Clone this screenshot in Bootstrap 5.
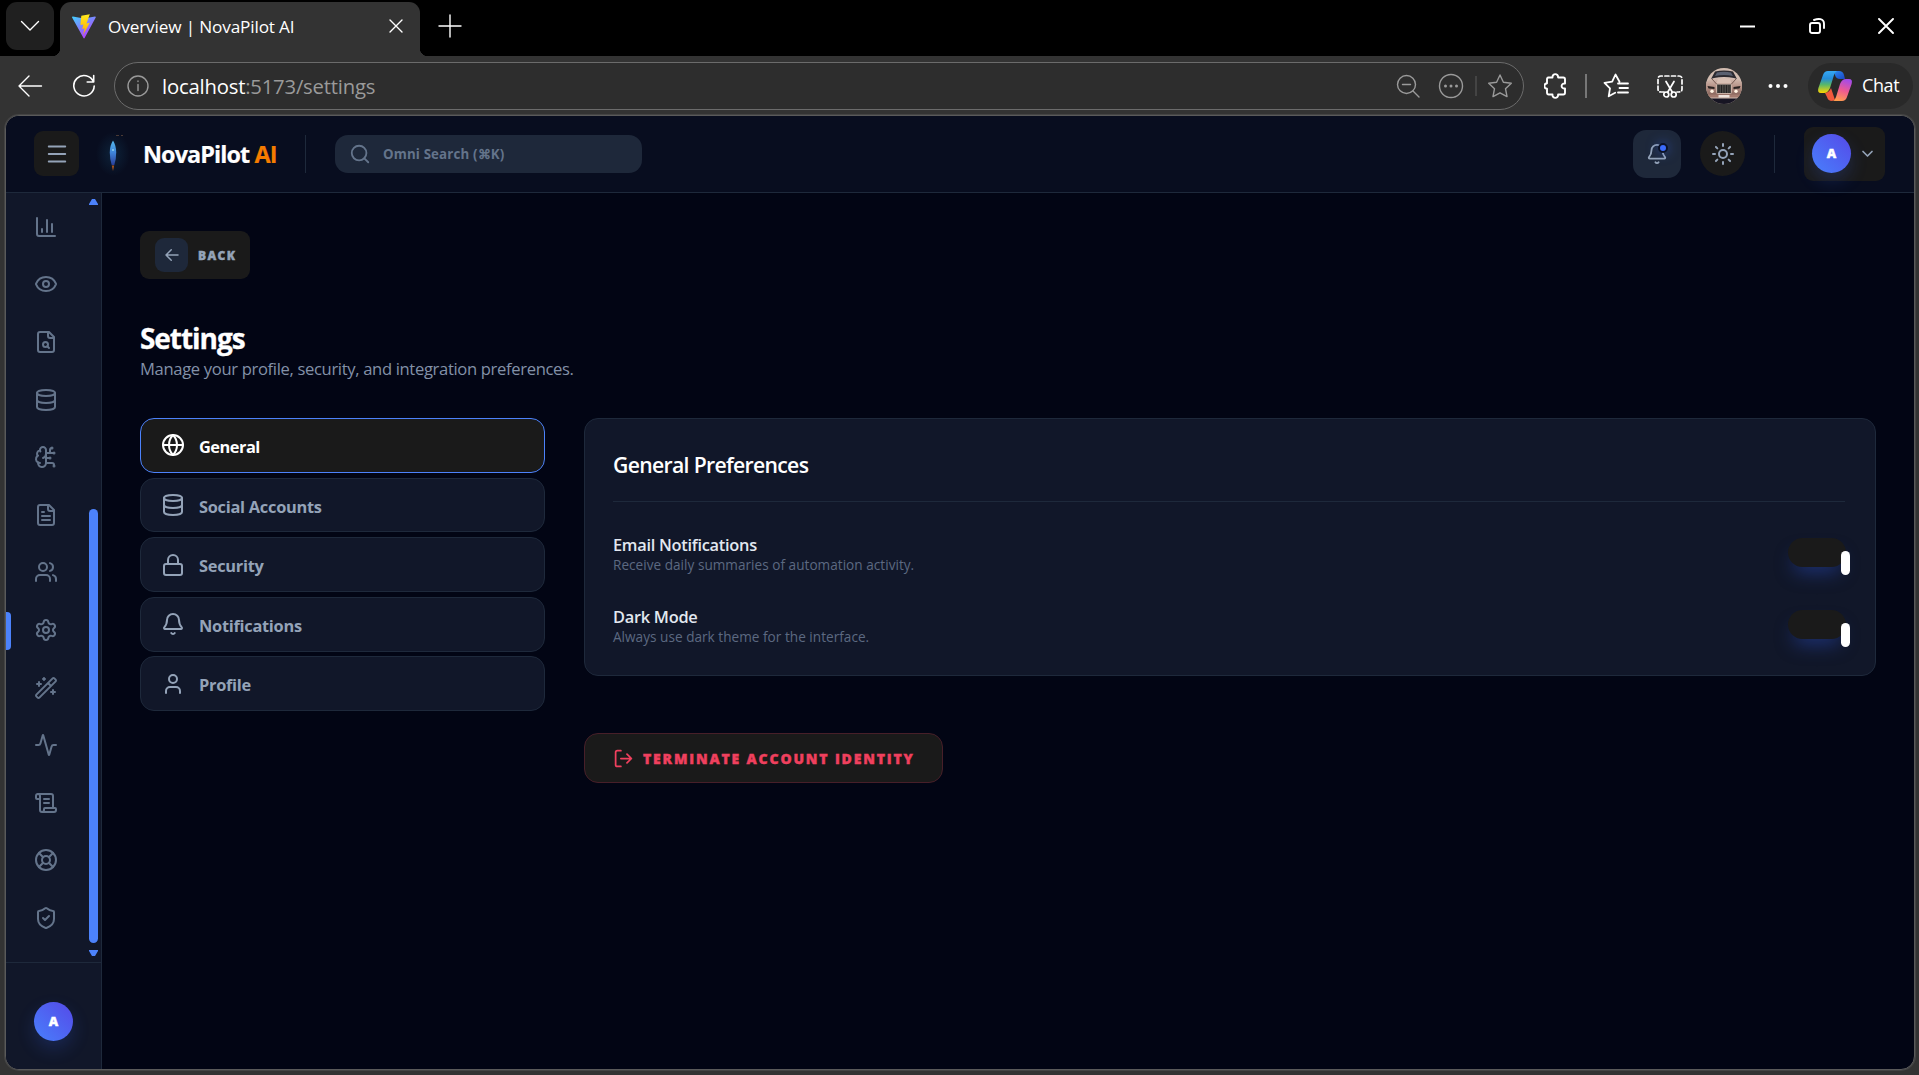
<!DOCTYPE html>
<html lang="en" data-bs-theme="dark">
<head>
<meta charset="utf-8">
<title>Overview | NovaPilot AI</title>
<meta name="viewport" content="width=device-width, initial-scale=1">
<link href="https://cdn.jsdelivr.net/npm/bootstrap@5.3.0/dist/css/bootstrap.min.css" rel="stylesheet">
<style>
  :root { --np-blue:#4c82fb; --np-line:#1e293b; --np-panel:#111729; --np-coal:#1a1a1a; --np-muted:#94a3b8; --np-dim:#64748b; }
  body { font-family:"Open Sans","Noto Sans",sans-serif; background:#333; color:#fff; width:1919px; height:1075px; line-height:1.2; }
  svg { display:block; flex:none; }
  .ln { fill:none; stroke:currentColor; stroke-width:2; stroke-linecap:round; stroke-linejoin:round; width:24px; height:24px; }
  .fluent { fill:none; stroke:currentColor; stroke-width:1.4; stroke-linecap:round; stroke-linejoin:round; }
  .drop1 { padding-top:2px; }

  /* browser chrome */
  .titlebar { height:56px; background:#000; padding:2px 0 0 6px; }
  .tab-menu { width:48px; height:48px; border-radius:11px; background:#202020; }
  .browser-tab { width:360px; height:54px; margin-left:6px; background:#333; border-radius:11px 11px 0 0; padding:0 17px 6px 12px; font-size:17.2px; letter-spacing:-.15px; }
  .browser-tab::before, .browser-tab::after { content:""; position:absolute; bottom:0; width:8px; height:8px; }
  .browser-tab::before { left:-8px; background:radial-gradient(circle at 0 0,transparent 8px,#333 8.5px); }
  .browser-tab::after { right:-8px; background:radial-gradient(circle at 100% 0,transparent 8px,#333 8.5px); }
  .win-btns { gap:53.5px; padding:0 25px 6px 0; }
  .toolbar { height:59px; padding:0 6px 0 17px; }
  .omnibox { width:1410px; height:48px; margin-left:18px; border:1.5px solid #6b6b6b; border-radius:24px; background:#2d2d2d; padding:0 10px 0 11px; color:#9a9a9a; font-size:20.3px; letter-spacing:-.2px; }
  .omnibox b { font-weight:400; color:#fff; }
  .v-rule { width:2px; height:24px; background:#777; }
  .chat-pill { width:105px; height:46px; border-radius:23px; background:#292929; font-size:18px; padding-left:9px; }

  /* app frame */
  .app-frame { width:1910px; height:955px; margin-left:5px; border:1px solid #5a5a5a; border-radius:14px; background:#020514; overflow:hidden; box-shadow:0 0 0 1px #444; }
  .app-header { height:77px; background:#080d1f; border-bottom:1px solid var(--np-line); padding:0 29px 1px 28px; }
  .coal-btn { background:var(--np-coal); border:0; color:var(--np-muted); border-radius:9px; padding:0; }
  .sq45 { width:45px; height:45px; }
  .brand { font-size:23.4px; font-weight:700; letter-spacing:-.92px; margin-left:14px; width:162px; white-space:nowrap; -webkit-text-stroke:.2px; }
  .brand span { color:#f57c00; }
  .v-line { width:1px; height:38px; background:var(--np-line); }
  .search-box { width:307px; height:38px; margin-left:29px; border-radius:13px; background:#1e283a; color:var(--np-dim); padding-left:14px; font-size:13.3px; font-weight:700; letter-spacing:.15px; }
  .bell-btn { width:48px; height:48px; border-radius:13px; background:#1e283a; color:var(--np-muted); border:0; padding:0; }
  .bell-dot { position:absolute; left:25px; top:13px; width:10px; height:10px; border-radius:50%; background:#3b6bfb; border:2px solid #0b1226; box-shadow:0 0 12px #3b6bfb88; }
  .avatar { width:39px; height:39px; border-radius:50%; background:linear-gradient(45deg,#4880fc,#5549e8); font-weight:800; font-size:13px; -webkit-text-stroke:.4px; box-shadow:0 8px 18px #3b6bfb33; }
  .profile-btn { width:81px; height:54px; padding:0 11px 0 8px; }

  .side { width:96px; background:var(--np-panel); border-right:1px solid var(--np-line); }
  .side-scroll { height:770px; border-bottom:1px solid var(--np-line); color:var(--np-dim); }
  .side-nav { width:83px; padding-top:5px; }
  .side-item { height:57.6px; padding-left:28px; position:relative; }
  .side-item.on::before { content:""; position:absolute; left:0; top:10.5px; width:5px; height:38px; border-radius:0 4px 4px 0; background:var(--np-blue); }
  .side-bar { width:9px; padding:6px 0 6px; }
  .side-bar i { width:9px; height:434px; border-radius:5px; background:var(--np-blue); margin-bottom:7px; margin-top:auto; }

  .page-area { padding:38px 38px 0; }
  .back-btn { width:110px; height:48px; padding-left:15px; font-size:12px; font-weight:800; letter-spacing:1.35px; gap:10px; }
  .back-btn > span:first-child { width:33px; height:34px; border-radius:9px; background:#1e283a; }
  .back-btn > span:last-child, .end-btn > span { -webkit-text-stroke:.4px; }
  .page-title { font-size:28px; font-weight:700; letter-spacing:-1.05px; line-height:34px; margin:42px 0 0; -webkit-text-stroke:.3px; }
  .page-sub { font-size:16.6px; line-height:24px; letter-spacing:-.34px; color:#8391a8; margin:2px 0 37px; }
  .tab-col { width:405px; gap:4.8px; }
  .tab-link { height:54.8px; border:1px solid var(--np-line); border-radius:14px; background:var(--np-panel); color:var(--np-muted); font-size:16.4px; font-weight:700; letter-spacing:-.28px; padding:0 20px; gap:14px; }
  .tab-link span { padding-top:3px; }
  .tab-link.on { background:var(--np-coal); border-color:var(--np-blue); color:#fff; letter-spacing:-.5px; }
  .pref-card { width:1292px; height:258px; border:1px solid var(--np-line); border-radius:14px; background:var(--np-panel); padding:29px 30px 29px 28px; }
  .pref-title { font-size:21.2px; font-weight:600; letter-spacing:-.68px; line-height:34px; height:54px; border-bottom:1px solid var(--np-line); margin:0 0 29px; }
  .pref-row { height:72px; }
  .pref-name { font-size:16.4px; font-weight:600; letter-spacing:-.28px; line-height:25px; padding-top:1px; color:#e2e8f0; }
  .pref-note { font-size:13.6px; line-height:18px; margin-top:-1px; letter-spacing:.02px; color:#5c6981; }
  .switch { width:58px; height:29px; margin:7px -1px 0 0; border-radius:15px; background:var(--np-coal); box-shadow:0 11px 18px -5px #2747b088; position:relative; }
  .switch::after { content:""; position:absolute; left:53px; top:13px; width:9px; height:24px; border-radius:5px; background:#fff; }
  .end-btn { width:359px; height:50px; margin-top:57px; border:1px solid #471f29; border-radius:14px; background:var(--np-coal); color:#f0405e; font-size:14px; font-weight:800; letter-spacing:1.83px; padding-left:28px; gap:9px; white-space:nowrap; }
</style>
<script src="https://cdn.jsdelivr.net/npm/bootstrap@5.3.0/dist/js/bootstrap.bundle.min.js"></script>
</head>
<body class="overflow-hidden">

<header>
  <div class="titlebar d-flex align-items-start">
    <div class="tab-menu d-flex align-items-center justify-content-center">
      <svg class="fluent" width="20" height="12" viewBox="0 0 20 12"><path d="M1.500 1.500 10 10l8.500-8.500"/></svg>
    </div>
    <div class="browser-tab d-flex align-items-center position-relative">
      <svg width="24" height="25" viewBox="0 0 24 25">
        <defs>
          <linearGradient id="vA" x1="0" y1="0" x2=".7" y2="1"><stop offset="0" stop-color="#41d1ff"/><stop offset="1" stop-color="#bd34fe"/></linearGradient>
          <linearGradient id="vB" x1="0" y1="0" x2="0" y2="1"><stop offset="0" stop-color="#ffea1f"/><stop offset="1" stop-color="#ffa800"/></linearGradient>
        </defs>
        <path d="M23.700 3.500 12.600 24c-.2.500-.9.500-1.100 0L.1 3.500c-.2-.5.200-1.100.7-1L12 4.500l11-2c.6-.1 1 .500.700 1z" fill="url(#vA)"/>
        <path d="m17.800.2-8.500 1.500-.9 9.300 3-.6-1.200 4.500 2.500-.6-1.700 6.800 6.800-12.300-3.300.6z" fill="url(#vB)"/>
      </svg>
      <span class="ms-2 ps-1 flex-grow-1 drop1">Overview | NovaPilot AI</span>
      <svg class="fluent" width="14" height="14" viewBox="0 0 14 14"><path d="m1 1 12 12M13 1 1 13"/></svg>
    </div>
    <svg class="fluent mt-2" style="width:26px;height:32px;margin-left:17px" viewBox="0 0 26 32"><path d="M13 5v22M2 16h22"/></svg>
    <div class="win-btns d-flex align-items-center ms-auto align-self-stretch">
      <svg width="15" height="3"><path d="M0 1.500h15" stroke="#fff" stroke-width="2"/></svg>
      <svg class="fluent" width="16" height="16" viewBox="0 0 16 16" style="stroke-width:1.9"><rect x="1" y="5" width="10" height="10" rx="2"/><path d="M5 2c4-1.500 10-2 10 4v4"/></svg>
      <svg class="fluent" width="16" height="16" viewBox="0 0 16 16" style="stroke-width:1.9"><path d="m1 1 14 14M15 1 1 15"/></svg>
    </div>
  </div>

  <div class="toolbar d-flex align-items-center">
    <svg class="fluent" width="26" height="22" viewBox="0 0 26 22"><path d="M12 1 2 11l10 10M2 11h22.500"/></svg>
    <svg class="fluent" width="24" height="24" viewBox="0 0 24 24" style="margin-left:29px;stroke-width:1.600"><path d="M21.500 8A10.200 10.200 0 1 0 22.200 12M21.700 1.500V8h-6.500"/></svg>
    <div class="omnibox d-flex align-items-center">
      <svg class="fluent" width="24" height="24" viewBox="0 0 24 24"><circle cx="12" cy="12" r="10"/><path d="M12 10.500v6M12 7v.5"/></svg>
      <span class="flex-grow-1 ps-2 ms-1 drop1"><b>localhost</b>:5173/settings</span>
      <svg class="fluent" width="24" height="24" viewBox="0 0 24 24"><circle cx="10.500" cy="10.500" r="9"/><path d="m17 17 6 6M6.500 10.500h8"/></svg>
      <svg class="fluent" width="26" height="26" viewBox="0 0 26 26" style="margin-left:18px"><circle cx="13" cy="13" r="11.500"/><g fill="currentColor" stroke="none"><circle cx="7.500" cy="13" r="1.500"/><circle cx="13" cy="13" r="1.500"/><circle cx="18.500" cy="13" r="1.500"/></g></svg>
      <div class="v-rule" style="height:20px;background:#444;margin-left:11px"></div>
      <svg class="fluent" width="26" height="26" viewBox="0 0 26 26" style="margin-left:10px"><path d="m13 2 3.400 7.200 7.900 1-5.800 5.500 1.500 7.900L13 19.800l-7 3.800 1.500-7.900-5.800-5.500 7.900-1z"/></svg>
    </div>
    <svg class="fluent" width="24" height="26" viewBox="0 0 24 26" style="margin-left:20px;stroke-width:1.900"><path d="M4 4.500h4.500c-.4-4.500 6-4.500 5.600 0h5.200q1.700 0 1.700 1.700v4.300c-4.500-.6-4.500 5.600 0 5v4.300q0 1.700-1.700 1.700h-5.200c.4 4.500-6 4.500-5.600 0H4.700Q3 21.500 3 19.800v-4c-3.500-.6-3.500-5 0-5.600v-4q0-1.700 1.700-1.700z"/></svg>
    <div class="v-rule" style="margin-left:17px"></div>
    <svg class="fluent" width="26" height="26" viewBox="0 0 26 26" style="margin-left:16px;stroke-width:1.800"><path d="M16.500 8.800 12.500 1.500 9.200 8.700l-7.700 1.100 5.500 5.500-1.300 8 6.500-3.500M15 10.500h10M16.500 15h8.500M15 19.500h10"/></svg>
    <svg class="fluent" width="26" height="24" viewBox="0 0 26 24" style="margin-left:28px;stroke-width:1.700"><path d="M7 18H4q-3 0-3-3V5q0-3 3-3h18q3 0 3 3v10q0 3-3 3h-2" stroke-dasharray="4 2.600"/><path d="m9 7.500 6.500 11M17 7.500l-6.500 11"/><circle cx="9.300" cy="20.500" r="2.500"/><circle cx="16.700" cy="20.500" r="2.500"/></svg>
    <svg width="36" height="36" viewBox="0 0 36 36" style="margin-left:23px">
      <defs>
        <clipPath id="carClip"><circle cx="18" cy="18" r="18"/></clipPath>
        <linearGradient id="carPaint" x1="0" y1="0" x2="0" y2="1"><stop offset="0" stop-color="#d9c3b8"/><stop offset=".45" stop-color="#b8958a"/><stop offset="1" stop-color="#7d5a51"/></linearGradient>
      </defs>
      <g clip-path="url(#carClip)">
        <rect width="36" height="36" fill="#d2bcb0"/>
        <path d="M9 3.500q9-2 18 0l4 7.500H5z" fill="#2c2a30"/>
        <path d="M11 4.500q7-1.500 14 0l2 3.500q-9-2-18 0z" fill="#5a6070"/>
        <path d="M0 14q4-3.500 8-4 10-2 20 0 4 .5 8 4v15H0z" fill="url(#carPaint)"/>
        <path d="m6 11 5 5.500M30 11l-5 5.500" stroke="#5d423c" stroke-width=".8"/>
        <path d="M12 11q6-1 12 0l1.500 4h-15z" fill="#d8bfb3"/>
        <rect x="10.500" y="16" width="15" height="9.500" rx=".8" fill="#4a4744" stroke="#d2b9ad" stroke-width=".9"/>
        <path d="M13 17v8M15.500 17v8M18 17v8M20.500 17v8M23 17v8" stroke="#1f1d1d" stroke-width=".9"/>
        <path d="M1.500 18 8.500 19v2l-6-.5zM34.500 18l-7 1v2l6-.5z" fill="#2a2221"/>
        <circle cx="6" cy="23.300" r="1.700" fill="#fff3e2"/><circle cx="30" cy="23.300" r="1.700" fill="#fff3e2"/>
        <path d="M1 26.500h34v3H1z" fill="#a47c70"/><rect x="12.500" y="27" width="11" height="2.500" fill="#efe3dc"/>
        <path d="M0 30.500h36V36H0z" fill="#171523"/>
      </g>
    </svg>
    <svg width="20" height="6" viewBox="0 0 20 6" fill="#fff" style="margin-left:26px"><circle cx="2.500" cy="3" r="2"/><circle cx="10" cy="3" r="2"/><circle cx="17.500" cy="3" r="2"/></svg>
    <div class="chat-pill d-flex align-items-center ms-auto">
      <svg width="36" height="32" viewBox="0 0 36 32">
        <defs>
          <linearGradient id="cpA" x1="0" y1="0" x2="0" y2="1"><stop offset="0" stop-color="#36a8f5"/><stop offset=".35" stop-color="#258cd8"/><stop offset=".62" stop-color="#58b86a"/><stop offset="1" stop-color="#ffd500"/></linearGradient>
          <linearGradient id="cpB" x1=".6" y1="0" x2=".3" y2="1"><stop offset="0" stop-color="#a54be8"/><stop offset=".5" stop-color="#ee5a91"/><stop offset="1" stop-color="#ff9d4d"/></linearGradient>
          <linearGradient id="cpC" x1="0" y1="0" x2="1" y2="1"><stop offset="0" stop-color="#2b8bf0"/><stop offset="1" stop-color="#1a44c4"/></linearGradient>
        </defs>
        <path d="M17 1h5q4 0 5 4l1 4h-5q-4 0-5-4z" fill="url(#cpC)"/>
        <path d="M8 23q3 0 5-3l1-2 4 12-3 1q-4 0-5-4z" fill="#f0593c"/>
        <path d="M11 1h9q-2 1-3 4l-4 13q-2 5-6 5H4q-4 0-2.600-5L6 5q1.300-4 5-4z" fill="url(#cpA)"/>
        <path d="M25 31h-9q2-1 3-4l4-13q2-5 6-5h3q4 0 2.600 5L30 27q-1.300 4-5 4z" fill="url(#cpB)"/>
      </svg>
      <span style="margin-left:9px;letter-spacing:-.4px">Chat</span>
    </div>
  </div>
</header>

<div class="app-frame d-flex flex-column">
  <nav class="app-header d-flex align-items-center flex-shrink-0">
    <button class="coal-btn sq45 d-flex align-items-center justify-content-center"><svg class="ln" viewBox="0 0 24 24" style="stroke-width:1.800"><path d="M3.700 4.500h16.600M3.700 12h16.600M3.700 19.500h16.600"/></svg></button>
    <svg width="34" height="44" viewBox="0 0 34 44" style="margin-left:17px;margin-right:-1px">
      <defs>
        <linearGradient id="rk" x1="0" y1="0" x2="0" y2="1"><stop offset="0" stop-color="#54b9ee"/><stop offset=".5" stop-color="#3f83d8"/><stop offset="1" stop-color="#2a3f98"/></linearGradient>
        <radialGradient id="rkGlow"><stop offset="0" stop-color="#0f2b45" stop-opacity=".7"/><stop offset="1" stop-color="#0f2b45" stop-opacity="0"/></radialGradient>
      </defs>
      <ellipse cx="17" cy="22" rx="17" ry="22" fill="url(#rkGlow)"/>
      <path d="M17 8.500q3.200 5 3.200 12T18.300 33h-2.600Q13.800 27.500 13.800 20.500T17 8.500z" fill="url(#rk)"/>
      <circle cx="17" cy="18" r="1" fill="#8fd2ee"/>
      <path d="M15.800 33.500h2.400L17 39z" fill="#a8561f"/><path d="M20 3.500h3M25 3.500h2" stroke="#4a3a35"/>
    </svg>
    <div class="brand drop1">NovaPilot <span>AI</span></div>
    <div class="v-line"></div>
    <div class="search-box d-flex align-items-center">
      <svg class="ln" style="width:22px;height:22px" viewBox="0 0 24 24"><circle cx="11" cy="11" r="8"/><path d="m21 21-4.300-4.300"/></svg>
      <span class="drop1" style="margin-left:12px">Omni Search (⌘K)</span>
    </div>
    <button class="bell-btn d-flex align-items-center justify-content-center position-relative ms-auto">
      <svg class="ln" style="width:22px;height:22px" viewBox="0 0 24 24"><path d="M10.270 21a2 2 0 0 0 3.460 0"/><path d="M3.260 15.330A1 1 0 0 0 4 17h16a1 1 0 0 0 .74-1.670C19.410 13.960 18 12.500 18 8A6 6 0 0 0 6 8c0 4.500-1.410 5.960-2.740 7.330"/></svg>
      <span class="bell-dot"></span>
    </button>
    <button class="coal-btn sq45 rounded-circle d-flex align-items-center justify-content-center" style="margin-left:19px"><svg class="ln" viewBox="0 0 24 24"><circle cx="12" cy="12" r="4"/><path d="M12 2v2M12 20v2m-7.070-17.070 1.410 1.410m11.320 11.320 1.410 1.410M2 12h2m16 0h2M6.340 17.660l-1.410 1.410M19.070 4.930l-1.410 1.410"/></svg></button>
    <div class="v-line" style="margin:0 29px 0 29px"></div>
    <button class="coal-btn profile-btn d-flex align-items-center justify-content-between text-white">
      <span class="avatar d-flex align-items-center justify-content-center">A</span>
      <svg class="ln" style="width:13px;height:13px;color:#94a3b8;stroke-width:1.700" viewBox="0 0 13 13"><path d="m2 4.500 4.500 4.500L11 4.500"/></svg>
    </button>
  </nav>

  <div class="d-flex flex-grow-1">
    <aside class="side d-flex flex-column flex-shrink-0">
      <div class="side-scroll d-flex">
        <div class="side-nav">
          <div class="side-item d-flex align-items-center"><svg class="ln" viewBox="0 0 24 24"><path d="M3 3v16a2 2 0 0 0 2 2h16M18 17V9M13 17V5M8 17v-3"/></svg></div>
          <div class="side-item d-flex align-items-center"><svg class="ln" viewBox="0 0 24 24"><path d="M2.060 12.350a1 1 0 0 1 0-.7 10.750 10.750 0 0 1 19.880 0 1 1 0 0 1 0 .7 10.750 10.750 0 0 1-19.880 0"/><circle cx="12" cy="12" r="3"/></svg></div>
          <div class="side-item d-flex align-items-center"><svg class="ln" viewBox="0 0 24 24"><path d="M14 2v4a2 2 0 0 0 2 2h4"/><path d="M15 2H6a2 2 0 0 0-2 2v16a2 2 0 0 0 2 2h12a2 2 0 0 0 2-2V7Z"/><circle cx="11.500" cy="14.500" r="2.500"/><path d="M13.300 16.300 15 18"/></svg></div>
          <div class="side-item d-flex align-items-center"><svg class="ln" viewBox="0 0 24 24"><ellipse cx="12" cy="5" rx="9" ry="3"/><path d="M3 5v14a9 3 0 0 0 18 0V5"/><path d="M3 12a9 3 0 0 0 18 0"/></svg></div>
          <div class="side-item d-flex align-items-center"><svg class="ln" viewBox="0 0 24 24"><path d="M12 5a3 3 0 1 0-5.997.125 4 4 0 0 0-2.526 5.770 4 4 0 0 0 .556 6.588A4 4 0 1 0 12 18Z"/><path d="M9 13a4.500 4.500 0 0 0 3-4M6.003 5.125A3 3 0 0 0 6.401 6.500M3.477 10.896a4 4 0 0 1 .585-.396M6 18a4 4 0 0 1-1.967-.516M12 13h4M12 18h6a2 2 0 0 1 2 2v1M12 8h8M16 8V5a2 2 0 0 1 2-2"/><circle cx="16" cy="13" r=".5"/><circle cx="18" cy="3" r=".5"/><circle cx="20" cy="21" r=".5"/><circle cx="20" cy="8" r=".5"/></svg></div>
          <div class="side-item d-flex align-items-center"><svg class="ln" viewBox="0 0 24 24"><path d="M15 2H6a2 2 0 0 0-2 2v16a2 2 0 0 0 2 2h12a2 2 0 0 0 2-2V7Z"/><path d="M14 2v4a2 2 0 0 0 2 2h4M10 9H8M16 13H8M16 17H8"/></svg></div>
          <div class="side-item d-flex align-items-center"><svg class="ln" viewBox="0 0 24 24"><path d="M16 21v-2a4 4 0 0 0-4-4H6a4 4 0 0 0-4 4v2"/><circle cx="9" cy="7" r="4"/><path d="M22 21v-2a4 4 0 0 0-3-3.870M16 3.130a4 4 0 0 1 0 7.750"/></svg></div>
          <div class="side-item on d-flex align-items-center"><svg class="ln" viewBox="0 0 24 24"><path d="M9.671 4.136a2.340 2.340 0 0 1 4.659 0 2.340 2.340 0 0 0 3.319 1.915 2.340 2.340 0 0 1 2.330 4.033 2.340 2.340 0 0 0 0 3.831 2.340 2.340 0 0 1-2.330 4.033 2.340 2.340 0 0 0-3.319 1.915 2.340 2.340 0 0 1-4.659 0 2.340 2.340 0 0 0-3.320-1.915 2.340 2.340 0 0 1-2.330-4.033 2.340 2.340 0 0 0 0-3.831A2.340 2.340 0 0 1 6.350 6.051a2.340 2.340 0 0 0 3.319-1.915"/><circle cx="12" cy="12" r="3"/></svg></div>
          <div class="side-item d-flex align-items-center"><svg class="ln" viewBox="0 0 24 24"><path d="m21.640 3.640-1.280-1.280a1.210 1.210 0 0 0-1.720 0L2.360 18.640a1.210 1.210 0 0 0 0 1.720l1.280 1.280a1.200 1.200 0 0 0 1.720 0L21.640 5.360a1.200 1.200 0 0 0 0-1.720M14 7l3 3M5 6v4M19 14v4M10 2v2M7 8H3M21 16h-4M11 3H9"/></svg></div>
          <div class="side-item d-flex align-items-center"><svg class="ln" viewBox="0 0 24 24"><path d="M22 12h-2.480a2 2 0 0 0-1.930 1.460l-2.350 8.360a.25.25 0 0 1-.48 0L9.240 2.180a.25.25 0 0 0-.48 0l-2.350 8.360A2 2 0 0 1 4.490 12H2"/></svg></div>
          <div class="side-item d-flex align-items-center"><svg class="ln" viewBox="0 0 24 24"><path d="M15 12h-5M15 8h-5M19 17V5a2 2 0 0 0-2-2H4"/><path d="M8 21h12a2 2 0 0 0 2-2v-1a1 1 0 0 0-1-1H11a1 1 0 0 0-1 1v1a2 2 0 1 1-4 0V5a2 2 0 1 0-4 0v2a1 1 0 0 0 1 1h3"/></svg></div>
          <div class="side-item d-flex align-items-center"><svg class="ln" viewBox="0 0 24 24"><circle cx="12" cy="12" r="10"/><path d="m4.930 4.930 4.240 4.240M14.830 9.170l4.240-4.240M14.830 14.830l4.240 4.240M9.170 14.830l-4.240 4.240"/><circle cx="12" cy="12" r="4"/></svg></div>
          <div class="side-item d-flex align-items-center"><svg class="ln" viewBox="0 0 24 24"><path d="M20 13c0 5-3.500 7.500-7.660 8.950a1 1 0 0 1-.67-.01C7.500 20.500 4 18 4 13V6a1 1 0 0 1 1-1c2 0 4.500-1.200 6.240-2.720a1.170 1.170 0 0 1 1.520 0C14.510 3.810 17 5 19 5a1 1 0 0 1 1 1z"/><path d="m9 12 2 2 4-4"/></svg></div>
        </div>
        <div class="side-bar d-flex flex-column">
          <svg width="9" height="6"><path d="M0 6V5l3-5h3l3 5v1z" fill="#4c82fb"/></svg>
          <i></i>
          <svg width="9" height="6"><path d="M0 0v1l3 5h3l3-5V0z" fill="#4c82fb"/></svg>
        </div>
      </div>
      <div class="flex-grow-1" style="padding:39px 0 0 28px"><span class="avatar d-flex align-items-center justify-content-center">A</span></div>
    </aside>

    <main class="page-area flex-grow-1">
      <button class="coal-btn back-btn d-flex align-items-center">
        <span class="d-flex align-items-center justify-content-center"><svg class="ln" style="width:18px;height:18px" viewBox="0 0 24 24"><path d="m11 19-7-7 7-7M20 12H4"/></svg></span>
        <span class="drop1">BACK</span>
      </button>
      <h1 class="page-title">Settings</h1>
      <p class="page-sub">Manage your profile, security, and integration preferences.</p>
      <div class="d-flex justify-content-between align-items-start">
        <div class="tab-col d-flex flex-column">
          <a class="tab-link on d-flex align-items-center text-decoration-none"><svg class="ln" viewBox="0 0 24 24"><circle cx="12" cy="12" r="10"/><path d="M12 2a14.500 14.500 0 0 0 0 20 14.500 14.500 0 0 0 0-20M2 12h20"/></svg><span>General</span></a>
          <a class="tab-link d-flex align-items-center text-decoration-none"><svg class="ln" viewBox="0 0 24 24"><ellipse cx="12" cy="5" rx="9" ry="3"/><path d="M3 5v14a9 3 0 0 0 18 0V5"/><path d="M3 12a9 3 0 0 0 18 0"/></svg><span>Social Accounts</span></a>
          <a class="tab-link d-flex align-items-center text-decoration-none"><svg class="ln" viewBox="0 0 24 24"><rect x="3" y="11" width="18" height="11" rx="2"/><path d="M7 11V7a5 5 0 0 1 10 0v4"/></svg><span>Security</span></a>
          <a class="tab-link d-flex align-items-center text-decoration-none"><svg class="ln" viewBox="0 0 24 24"><path d="M10.270 21a2 2 0 0 0 3.460 0"/><path d="M3.260 15.330A1 1 0 0 0 4 17h16a1 1 0 0 0 .74-1.670C19.410 13.960 18 12.500 18 8A6 6 0 0 0 6 8c0 4.500-1.410 5.960-2.740 7.330"/></svg><span>Notifications</span></a>
          <a class="tab-link d-flex align-items-center text-decoration-none"><svg class="ln" viewBox="0 0 24 24"><path d="M19 21v-2a4 4 0 0 0-4-4H9a4 4 0 0 0-4 4v2"/><circle cx="12" cy="7" r="4"/></svg><span>Profile</span></a>
        </div>
        <div>
          <section class="pref-card">
            <h2 class="pref-title">General Preferences</h2>
            <div class="pref-row d-flex justify-content-between align-items-start">
              <div><div class="pref-name">Email Notifications</div><div class="pref-note">Receive daily summaries of automation activity.</div></div>
              <div class="switch"></div>
            </div>
            <div class="pref-row d-flex justify-content-between align-items-start">
              <div><div class="pref-name">Dark Mode</div><div class="pref-note">Always use dark theme for the interface.</div></div>
              <div class="switch"></div>
            </div>
          </section>
          <button class="end-btn d-flex align-items-center"><svg class="ln" style="width:21px;height:21px" viewBox="0 0 24 24"><path d="M9 21H5a2 2 0 0 1-2-2V5a2 2 0 0 1 2-2h4M16 17l5-5-5-5M21 12H9"/></svg><span class="drop1">TERMINATE ACCOUNT IDENTITY</span></button>
        </div>
      </div>
    </main>
  </div>
</div>
</body>
</html>
